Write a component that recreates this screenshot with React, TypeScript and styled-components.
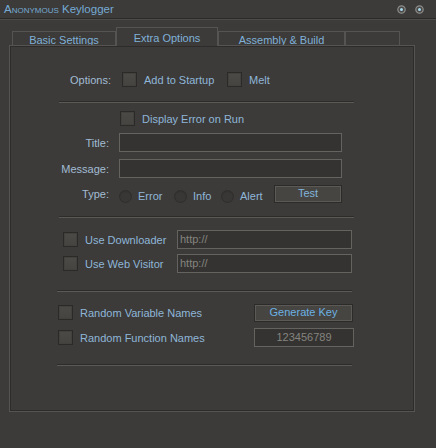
import React from "react";
import styled, { createGlobalStyle } from "styled-components";

const GlobalStyle = createGlobalStyle`
  html, body {
    margin: 0;
    padding: 0;
    background: #3c3b39;
  }
  body {
    font-family: "Liberation Sans", Arial, sans-serif;
    font-size: 11px;
  }
`;

const Window = styled.div`
  width: 436px;
  height: 448px;
  background: #3c3b39;
  overflow: hidden;
`;

/* TITLE BAR */
const TitleBar = styled.div`
  height: 18px;
  display: flex;
  align-items: center;
  justify-content: space-between;
  padding: 0 12px 0 4px;
  border-bottom: 1px solid #2b2a28;
  box-shadow: 0 1px 0 #4d4c49;
`;

const Title = styled.span`
  font-size: 11.5px;
  color: #76aad4;
`;

const SmallCaps = styled.span`
  font-variant: small-caps;
`;

const TitleButtons = styled.div`
  display: flex;
  gap: 9px;
`;

const TitleButton = () => (
  <svg width="9" height="9" viewBox="0 0 9 9">
    <circle cx="4.5" cy="4.5" r="3.7" fill="#4a4a48" stroke="#8c8c8a" strokeWidth="1.2" />
    <circle cx="4.5" cy="4.5" r="1.5" fill="#a8d8ec" />
  </svg>
);

/* TABS */
const TabStrip = styled.div`
  height: 25px;
  margin-top: 1px;
  padding-left: 12px;
  display: flex;
  align-items: flex-end;
`;

const Tab = styled.div<{ $active?: boolean; $width: number }>`
  position: relative;
  z-index: ${(p) => (p.$active ? 1 : 0)};
  box-sizing: border-box;
  width: ${(p) => p.$width}px;
  height: ${(p) => (p.$active ? 19 : 14)}px;
  margin-bottom: ${(p) => (p.$active ? -1 : 0)}px;
  padding-top: ${(p) => (p.$active ? 4 : 2)}px;
  border: 1px solid #555452;
  border-bottom: none;
  background: #3c3b39;
  color: #80b0d8;
  line-height: 13px;
  text-align: center;
  overflow: hidden;
  white-space: nowrap;
`;

const Panel = styled.div`
  box-sizing: border-box;
  width: 406px;
  height: 367px;
  margin-left: 9px;
  border: 1px solid #555452;
  box-shadow: inset 0 0 0 1px #2d2c2a;
  overflow: hidden;
`;

/* FORM PARTS */
const Row = styled.div<{ $mt: number; $h?: number }>`
  display: flex;
  align-items: center;
  height: ${(p) => p.$h ?? 15}px;
  margin-top: ${(p) => p.$mt}px;
`;

const FieldLabel = styled.span<{ $width: number }>`
  width: ${(p) => p.$width}px;
  flex: none;
  text-align: right;
  color: #a3bcd4;
`;

const Spacer = styled.span<{ $width: number }>`
  width: ${(p) => p.$width}px;
  flex: none;
`;

const Separator = styled.div<{ $mt: number; $ml: number }>`
  width: 295px;
  height: 0;
  margin: ${(p) => p.$mt}px 0 0 ${(p) => p.$ml}px;
  border-top: 1px solid #2d2c2a;
  border-bottom: 1px solid #5a5956;
`;

const CheckOption = styled.label<{ $ml: number; $width?: number }>`
  display: flex;
  align-items: center;
  gap: 7px;
  flex: none;
  margin-left: ${(p) => p.$ml}px;
  width: ${(p) => (p.$width ? `${p.$width}px` : "auto")};
  color: #8fb6d8;
  white-space: nowrap;
`;

const CheckBox = styled.span`
  box-sizing: border-box;
  width: 15px;
  height: 15px;
  flex: none;
  border: 1px solid #2b2a28;
  background: linear-gradient(#4b4a47, #454440);
  box-shadow: inset 0 0 0 1px #42413e;
`;

const RadioOption = styled.label<{ $width: number }>`
  display: flex;
  align-items: center;
  gap: 6px;
  flex: none;
  width: ${(p) => p.$width}px;
  margin-top: 4px;
  color: #8fb6d8;
`;

const Radio = styled.span`
  box-sizing: border-box;
  width: 13px;
  height: 13px;
  border-radius: 50%;
  border: 1px solid #2f2e2c;
  background: #383735;
  box-shadow: inset 0 1px 0 #333230;
`;

const TextBox = styled.div<{ $ml: number; $width: number; $center?: boolean }>`
  box-sizing: border-box;
  width: ${(p) => p.$width}px;
  height: 19px;
  flex: none;
  margin-left: ${(p) => p.$ml}px;
  padding: 0 2px;
  border: 1px solid #64635f;
  background: #343331;
  color: #85847f;
  line-height: 17px;
  text-align: ${(p) => (p.$center ? "center" : "left")};
`;

const Button = styled.div<{ $width: number; $color?: string }>`
  box-sizing: border-box;
  width: ${(p) => p.$width}px;
  height: 18px;
  flex: none;
  border: 1px solid #2c2b29;
  box-shadow: inset 0 0 0 1px #5b5a56;
  background: #464541;
  color: ${(p) => p.$color ?? "#82b4dc"};
  line-height: 15px;
  text-align: center;
`;

export default function App() {
  return (
    <Window>
      <GlobalStyle />
      <TitleBar>
        <Title>
          <SmallCaps>Anonymous</SmallCaps> Keylogger
        </Title>
        <TitleButtons>
          <TitleButton />
          <TitleButton />
        </TitleButtons>
      </TitleBar>

      <TabStrip>
        <Tab $width={104}>Basic Settings</Tab>
        <Tab $width={102} $active>
          Extra Options
        </Tab>
        <Tab $width={127}>Assembly &amp; Build</Tab>
        <Tab $width={55} />
      </TabStrip>

      <Panel>
        <Row $mt={26}>
          <FieldLabel $width={101}>Options:</FieldLabel>
          <CheckOption $ml={11} $width={105}>
            <CheckBox />
            Add to Startup
          </CheckOption>
          <CheckOption $ml={0}>
            <CheckBox />
            Melt
          </CheckOption>
        </Row>
        <Separator $mt={14} $ml={49} />

        <Row $mt={8}>
          <CheckOption $ml={110}>
            <CheckBox />
            Display Error on Run
          </CheckOption>
        </Row>
        <Row $mt={7} $h={19}>
          <FieldLabel $width={99}>Title:</FieldLabel>
          <TextBox $ml={10} $width={223} />
        </Row>
        <Row $mt={7} $h={19}>
          <FieldLabel $width={99}>Message:</FieldLabel>
          <TextBox $ml={10} $width={223} />
        </Row>
        <Row $mt={7} $h={18}>
          <FieldLabel $width={99}>Type:</FieldLabel>
          <Spacer $width={10} />
          <RadioOption $width={55}>
            <Radio />
            Error
          </RadioOption>
          <RadioOption $width={47}>
            <Radio />
            Info
          </RadioOption>
          <RadioOption $width={53}>
            <Radio />
            Alert
          </RadioOption>
          <Button $width={68}>Test</Button>
        </Row>
        <Separator $mt={13} $ml={49} />

        <Row $mt={12} $h={19}>
          <CheckOption $ml={53} $width={114}>
            <CheckBox />
            Use Downloader
          </CheckOption>
          <TextBox $ml={0} $width={175}>
            http://
          </TextBox>
        </Row>
        <Row $mt={5} $h={19}>
          <CheckOption $ml={53} $width={114}>
            <CheckBox />
            Use Web Visitor
          </CheckOption>
          <TextBox $ml={0} $width={175}>
            http://
          </TextBox>
        </Row>
        <Separator $mt={17} $ml={47} />

        <Row $mt={11} $h={19}>
          <CheckOption $ml={48} $width={196}>
            <CheckBox />
            Random Variable Names
          </CheckOption>
          <Button $width={99} $color="#6cb2e4">
            Generate Key
          </Button>
        </Row>
        <Row $mt={6} $h={19}>
          <CheckOption $ml={48} $width={196}>
            <CheckBox />
            Random Function Names
          </CheckOption>
          <TextBox $ml={0} $width={100} $center>
            123456789
          </TextBox>
        </Row>
        <Separator $mt={17} $ml={47} />
      </Panel>
    </Window>
  );
}
